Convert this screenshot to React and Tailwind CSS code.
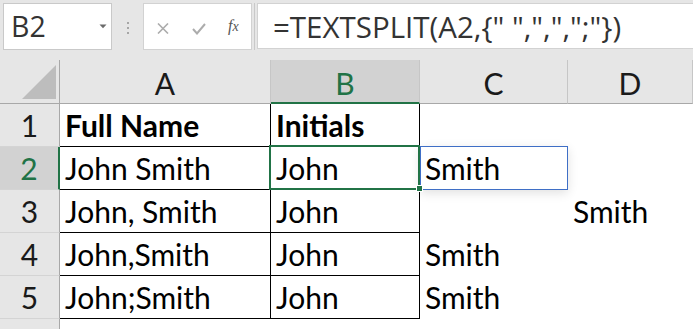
import React from 'react';

const cellFont = "font-['Lato',sans-serif]";
const uiFont = "font-['Open_Sans',sans-serif]";

const rows = [
  { n: 1, a: 'Full Name', b: 'Initials', c: '', d: '', bold: true },
  { n: 2, a: 'John Smith', b: 'John', c: 'Smith', d: '' },
  { n: 3, a: 'John, Smith', b: 'John', c: '', d: 'Smith' },
  { n: 4, a: 'John,Smith', b: 'John', c: 'Smith', d: '' },
  { n: 5, a: 'John;Smith', b: 'John', c: 'Smith', d: '' },
];

function Toolbar() {
  return (
    <div className="flex items-start h-[60px] bg-[#e6e6e6] pt-[3px] pl-[3px]">
      {/* name box */}
      <div className="relative w-[109px] h-[47px] bg-white border border-[#c9c9c9] flex items-center">
        <span className={`${uiFont} text-[28.5px] leading-[40px] text-[#333] pl-[7px] pb-[1px]`}>B2</span>
        <svg className="absolute left-[95px] top-[20px]" width="8" height="5" viewBox="0 0 8 5">
          <path d="M0.5 0.5 L7.5 0.5 L4 4.2 Z" fill="#6b6b6b" />
        </svg>
      </div>
      {/* dots */}
      <div className="w-[31px] h-[47px] flex items-center justify-center">
        <div className="flex flex-col gap-[3px] pt-[2px]">
          <span className="block w-[2px] h-[2px] bg-[#a6a6a6]" />
          <span className="block w-[2px] h-[2px] bg-[#a6a6a6]" />
          <span className="block w-[2px] h-[2px] bg-[#a6a6a6]" />
        </div>
      </div>
      {/* cancel / enter / fx */}
      <div className="relative w-[109px] h-[47px] bg-white border border-[#d2d2d2]">
        <svg className="absolute left-[13px] top-[19px]" width="12" height="11" viewBox="0 0 12 11">
          <path d="M1 0.5 L11 10.5 M11 0.5 L1 10.5" stroke="#acacac" strokeWidth="1.6" />
        </svg>
        <svg className="absolute left-[48px] top-[19px]" width="14" height="12" viewBox="0 0 14 12">
          <path d="M1 6 L5 10.5 L13 1" stroke="#acacac" strokeWidth="2" fill="none" />
        </svg>
        <span className="absolute left-[84px] top-[12px] font-['Liberation_Serif',serif] italic text-[16px] leading-[20px] text-[#555]">
          f<span className="text-[14px]">x</span>
        </span>
      </div>
      <div className="w-[5px] h-[47px] flex justify-center">
        <span className="block w-[1px] h-[47px] bg-[#c9c9c9]" />
      </div>
      {/* formula input */}
      <div className="flex-1 h-[46px] bg-white border-y border-l border-[#d2d2d2] flex items-center">
        <span className={`${uiFont} text-[29.5px] leading-[40px] text-[#333] pl-[15px] pt-[1px] whitespace-pre`}>
          {'=TEXTSPLIT(A2,{" ",",",";"})'}
        </span>
      </div>
    </div>
  );
}

function HeaderRow() {
  const cols = ['A', 'B', 'C', 'D'];
  return (
    <>
      <div className="relative h-[44px] bg-[#e6e6e6] border-r border-b border-[#a8a8a8]">
        <svg className="absolute left-[22px] top-[5px]" width="35" height="35" viewBox="0 0 35 35">
          <path d="M34 0 L34 34 L0 34 Z" fill="#bdbdbd" />
        </svg>
      </div>
      {cols.map((c) => {
        const sel = c === 'B';
        return (
          <div
            key={c}
            className={`h-[44px] flex justify-center ${cellFont} text-[30px] leading-[42px] pt-[2px] ${
              sel
                ? 'bg-[#d2d2d2] text-[#217346] border-b-2 border-b-[#217346] border-r border-r-[#c6c6c6]'
                : 'bg-[#e6e6e6] text-[#1a1a1a] border-b border-b-[#a8a8a8] border-r border-r-[#c6c6c6]'
            }`}
          >
            {c}
          </div>
        );
      })}
    </>
  );
}

function DataRow({ row }) {
  const sel = row.n === 2;
  const text = `${cellFont} text-[30px] leading-[42px] pl-[5px] whitespace-nowrap ${row.bold ? 'font-bold' : ''} text-black`;
  return (
    <>
      <div
        className={`h-[43px] flex justify-center ${cellFont} text-[30px] leading-[42px] border-b border-b-[#d4d4d4] ${
          sel ? 'bg-[#d2d2d2] text-[#217346] border-r-2 border-r-[#217346]' : 'bg-[#e6e6e6] text-[#1a1a1a] border-r border-r-[#a8a8a8]'
        }`}
      >
        {row.n}
      </div>
      <div className={`h-[43px] border-r border-b border-black ${text}`}>{row.a}</div>
      <div className={`relative h-[43px] border-r border-b border-black ${text}`}>
        {row.b}
        {sel && (
          <>
            <div className="absolute -left-[2px] -top-[2px] w-[151px] h-[45px] border-2 border-[#217346] z-20" />
            <div className="absolute left-[145px] top-[38px] w-[7px] h-[7px] bg-[#217346] border border-white z-30" />
          </>
        )}
      </div>
      {sel ? (
        <div className="relative z-10 -mt-[1px] h-[44px] border border-[#3f6fc6] bg-white shadow-[0_3px_10px_rgba(0,0,0,0.12)] font-['Lato',sans-serif] text-[30px] leading-[42px] pl-[4px] text-black">
          {row.c}
        </div>
      ) : (
        <div className={`h-[43px] ${text}`}>{row.c}</div>
      )}
      <div className={`h-[43px] ${text}`}>{row.d}</div>
    </>
  );
}

export default function App() {
  return (
    <div className="w-[693px] h-[329px] overflow-hidden bg-white">
      <Toolbar />
      <div className="grid grid-cols-[60px_211px_149px_148px_1fr]">
        <HeaderRow />
        {rows.map((r) => (
          <DataRow key={r.n} row={r} />
        ))}
        <div className="h-[11px] bg-[#e6e6e6] border-r border-[#a8a8a8]" />
        <div className="h-[11px]" />
        <div className="h-[11px]" />
        <div className="h-[11px]" />
        <div className="h-[11px]" />
      </div>
    </div>
  );
}
